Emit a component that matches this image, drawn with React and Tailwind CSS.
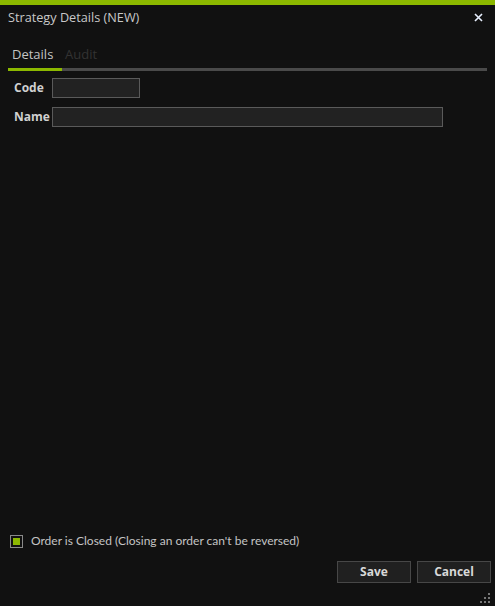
import React, { useState } from 'react';

const App = () => {
  const [tab, setTab] = useState('details');
  const [closed, setClosed] = useState(true);

  return (
    <div className="h-[606px] w-[495px] bg-[#111111] flex flex-col text-[#c4c4c4]" style={{ fontFamily: '"Open Sans", "Noto Sans", sans-serif' }}>
      <div className="h-[5px] bg-[#8cb800]" />

      {/* Title bar */}
      <div className="flex items-center justify-between pl-2 pr-3 h-[25px]">
        <span className="text-[12.7px] text-[#c8c8c8]">Strategy Details (NEW)</span>
        <button className="text-white">
          <svg width="9" height="9" viewBox="0 0 9 9">
            <path d="M1 1 L8 8 M8 1 L1 8" stroke="#e8f0ff" strokeWidth="1.6" />
          </svg>
        </button>
      </div>

      {/* Tabs */}
      <div className="px-2 mt-[12px]">
        <div className="flex text-[13px] h-[26px]">
          <button onClick={() => setTab('details')} className={`w-[54px] text-left pl-1 ${tab === 'details' ? 'text-[#c4c4c4]' : 'text-[#333333]'}`}>Details</button>
          <button onClick={() => setTab('audit')} className={`text-left pl-[3px] ${tab === 'audit' ? 'text-[#c4c4c4]' : 'text-[#333333]'}`}>Audit</button>
        </div>
        <div className="flex h-[3px] w-[479px]">
          <div className="w-[54px] bg-[#8cb800]" />
          <div className="flex-1 bg-[#4a4a4a]" />
        </div>
      </div>

      {/* Form */}
      <div className="flex flex-col gap-[9px] pl-[14px] mt-[7px] text-[12px] font-bold text-[#d0d0d0]">
        <div className="flex items-center h-[20px]">
          <span className="w-[38px]">Code</span>
          <input className="w-[88px] h-[20px] bg-[#222222] border border-[#5a5a5a] outline-none px-1 text-[12px] font-normal" />
        </div>
        <div className="flex items-center h-[20px]">
          <span className="w-[38px]">Name</span>
          <input className="w-[391px] h-[20px] bg-[#222222] border border-[#5a5a5a] outline-none px-1 text-[12px] font-normal" />
        </div>
      </div>

      <div className="flex-1" />

      {/* Closed checkbox */}
      <label className="flex items-center gap-[8px] pl-[10px] text-[12px] text-[#c4c4c4] cursor-pointer" style={{ fontFamily: 'Lato, "Open Sans", sans-serif' }}>
        <span onClick={() => setClosed(!closed)} className="w-[13px] h-[13px] border border-[#8a8a8a] p-[2px] flex">
          {closed && <span className="flex-1 bg-[#8cb800]" />}
        </span>
        Order is Closed (Closing an order can't be reversed)
      </label>

      {/* Buttons */}
      <div className="flex justify-end gap-[6px] pr-[4px] mt-[11px] mb-[23px]">
        <button className="w-[74px] h-[22px] bg-[#202020] border border-[#474747] text-[12px] font-bold text-[#d8d8d8]">Save</button>
        <button className="w-[74px] h-[22px] bg-[#202020] border border-[#474747] text-[12px] font-bold text-[#d8d8d8]">Cancel</button>
      </div>

      <div className="relative">
        <svg className="absolute right-[4px] bottom-[1px]" width="12" height="12" viewBox="0 0 12 12">
          <rect x="9" y="0" width="2" height="2" fill="#777" />
          <rect x="5" y="4" width="2" height="2" fill="#777" />
          <rect x="9" y="4" width="2" height="2" fill="#777" />
          <rect x="1" y="8" width="2" height="2" fill="#777" />
          <rect x="5" y="8" width="2" height="2" fill="#777" />
          <rect x="9" y="8" width="2" height="2" fill="#777" />
        </svg>
      </div>
    </div>
  );
};

export default App;
